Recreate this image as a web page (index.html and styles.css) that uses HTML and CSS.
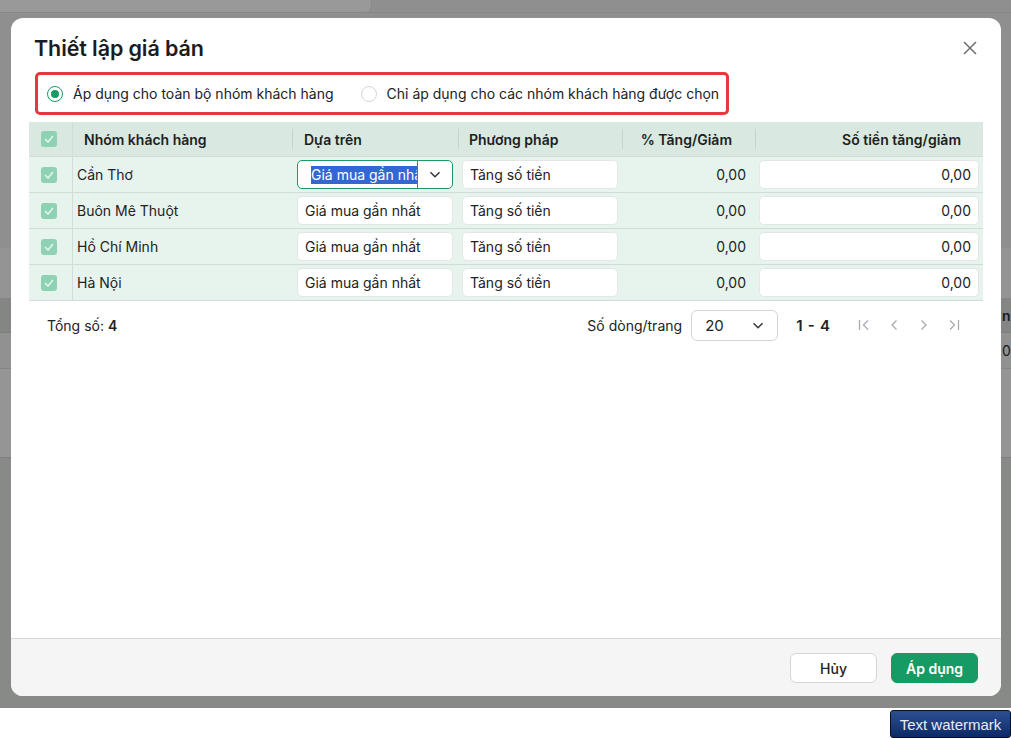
FILE: index.html
```html
<!DOCTYPE html>
<html lang="vi">
<head>
<meta charset="utf-8">
<title>Thiết lập giá bán</title>
<link rel="stylesheet" href="styles.css">
</head>
<body>
<div class="backdrop">
  <div class="bg-top"><div class="bg-top-box"></div></div>
  <div class="bg-main">
    <div class="bg-sec1"></div>
    <div class="bg-sec2"></div>
    <div class="bg-head"><span>n</span></div>
    <div class="bg-row"><span>0</span></div>
    <div class="bg-rest"></div>
  </div>
  <div class="bg-bottom"></div>
</div>

<div class="modal">
  <div class="modal-header">
    <h1 class="modal-title">Thiết lập giá bán</h1>
    <svg class="close" width="14" height="14" viewBox="0 0 14 14"><path d="M1 1l12 12M13 1L1 13" stroke="#6b6f73" stroke-width="1.5" fill="none"/></svg>
  </div>

  <div class="scope">
    <label class="radio-opt"><span class="radio checked"><span class="dot"></span></span>Áp dụng cho toàn bộ nhóm khách hàng</label>
    <label class="radio-opt second"><span class="radio"></span>Chỉ áp dụng cho các nhóm khách hàng được chọn</label>
  </div>

  <div class="table">
    <div class="row head">
      <div class="cell c-check"><span class="cb"><svg width="10" height="8" viewBox="0 0 10 8"><path d="M1 4l3 3 5-6" stroke="#e4f4ec" stroke-width="1.6" fill="none"/></svg></span></div>
      <div class="cell c-name"><span class="h-text">Nhóm khách hàng</span></div>
      <div class="cell c-base"><i class="sep"></i><span class="h-text">Dựa trên</span></div>
      <div class="cell c-method"><i class="sep"></i><span class="h-text">Phương pháp</span></div>
      <div class="cell c-pct"><i class="sep"></i><span class="h-text right">% Tăng/Giảm</span></div>
      <div class="cell c-amount"><i class="sep"></i><span class="h-text right">Số tiền tăng/giảm</span></div>
    </div>

    <div class="row">
      <div class="cell c-check"><span class="cb"><svg width="10" height="8" viewBox="0 0 10 8"><path d="M1 4l3 3 5-6" stroke="#e4f4ec" stroke-width="1.6" fill="none"/></svg></span></div>
      <div class="cell c-name">Cần Thơ</div>
      <div class="cell c-base">
        <div class="select focused">
          <span class="select-value"><span class="sel-text">Giá mua gần nhất</span></span>
          <span class="select-arrow"><svg width="12" height="7" viewBox="0 0 12 7"><path d="M1.5 1.2l4.5 4.5 4.5-4.5" stroke="#333" stroke-width="1.4" fill="none"/></svg></span>
        </div>
      </div>
      <div class="cell c-method"><div class="input">Tăng số tiền</div></div>
      <div class="cell c-pct">0,00</div>
      <div class="cell c-amount"><div class="input num">0,00</div></div>
    </div>

    <div class="row">
      <div class="cell c-check"><span class="cb"><svg width="10" height="8" viewBox="0 0 10 8"><path d="M1 4l3 3 5-6" stroke="#e4f4ec" stroke-width="1.6" fill="none"/></svg></span></div>
      <div class="cell c-name">Buôn Mê Thuột</div>
      <div class="cell c-base"><div class="input">Giá mua gần nhất</div></div>
      <div class="cell c-method"><div class="input">Tăng số tiền</div></div>
      <div class="cell c-pct">0,00</div>
      <div class="cell c-amount"><div class="input num">0,00</div></div>
    </div>

    <div class="row">
      <div class="cell c-check"><span class="cb"><svg width="10" height="8" viewBox="0 0 10 8"><path d="M1 4l3 3 5-6" stroke="#e4f4ec" stroke-width="1.6" fill="none"/></svg></span></div>
      <div class="cell c-name">Hồ Chí Minh</div>
      <div class="cell c-base"><div class="input">Giá mua gần nhất</div></div>
      <div class="cell c-method"><div class="input">Tăng số tiền</div></div>
      <div class="cell c-pct">0,00</div>
      <div class="cell c-amount"><div class="input num">0,00</div></div>
    </div>

    <div class="row">
      <div class="cell c-check"><span class="cb"><svg width="10" height="8" viewBox="0 0 10 8"><path d="M1 4l3 3 5-6" stroke="#e4f4ec" stroke-width="1.6" fill="none"/></svg></span></div>
      <div class="cell c-name">Hà Nội</div>
      <div class="cell c-base"><div class="input">Giá mua gần nhất</div></div>
      <div class="cell c-method"><div class="input">Tăng số tiền</div></div>
      <div class="cell c-pct">0,00</div>
      <div class="cell c-amount"><div class="input num">0,00</div></div>
    </div>

    <div class="pager">
      <div class="total">Tổng số: <b>4</b></div>
      <div class="pager-right">
        <span class="per-page-label">Số dòng/trang</span>
        <div class="page-size"><span>20</span><svg width="12" height="7" viewBox="0 0 12 7"><path d="M1.5 1.2l4.5 4.5 4.5-4.5" stroke="#333" stroke-width="1.4" fill="none"/></svg></div>
        <b class="range">1 - 4</b>
        <div class="nav">
          <svg width="12" height="14" viewBox="0 0 12 14"><path d="M1.5 2v10M10 2.5L5.5 7l4.5 4.5" stroke="#a6abb0" stroke-width="1.3" fill="none"/></svg>
          <svg width="12" height="14" viewBox="0 0 12 14"><path d="M8.5 2.5L4 7l4.5 4.5" stroke="#a6abb0" stroke-width="1.3" fill="none"/></svg>
          <svg width="12" height="14" viewBox="0 0 12 14"><path d="M3.5 2.5L8 7l-4.5 4.5" stroke="#a6abb0" stroke-width="1.3" fill="none"/></svg>
          <svg width="12" height="14" viewBox="0 0 12 14"><path d="M2 2.5L6.5 7 2 11.5M10.5 2v10" stroke="#a6abb0" stroke-width="1.3" fill="none"/></svg>
        </div>
      </div>
    </div>
  </div>

  <div class="modal-footer">
    <button class="btn btn-cancel">Hủy</button>
    <button class="btn btn-primary">Áp dụng</button>
  </div>
</div>

<div class="watermark">Text watermark</div>
</body>
</html>
```

FILE: styles.css
```css
* { box-sizing: border-box; }

body {
  margin: 0;
  width: 1011px;
  height: 738px;
  overflow: hidden;
  position: relative;
  background: #ffffff;
  font-family: Inter, "Noto Sans", "Liberation Sans", sans-serif;
  font-size: 14px;
  color: #222;
}

/* ---------- backdrop (page behind the overlay) ---------- */
.backdrop {
  height: 708px;
  display: flex;
  flex-direction: column;
  background: #888a88;
}
.bg-top {
  height: 13px;
  background: #8e8f8e;
  border-bottom: 1px solid #858685;
}
.bg-top-box {
  width: 372px;
  height: 12px;
  background: #999999;
  border-right: 1px solid #888;
  border-bottom-right-radius: 6px;
}
.bg-main {
  height: 445px;
  display: flex;
  flex-direction: column;
  border-bottom: 1px solid #7f817f;
}
.bg-sec1 { height: 235px; background: #8e8f8e; }
.bg-sec2 { height: 50px; background: #939493; }
.bg-head {
  height: 35px;
  background: #848684;
  border-bottom: 1px solid #7c7e7c;
  display: flex;
  align-items: center;
  padding-left: 1002px;
  font-weight: 600;
  color: #1b1b1b;
}
.bg-row {
  height: 36px;
  background: #909190;
  border-bottom: 1px solid #838583;
  display: flex;
  align-items: center;
  padding-left: 1002px;
  color: #1b1b1b;
}
.bg-rest { flex: 1; background: #959595; }
.bg-bottom { flex: 1; background: #888a88; }

/* ---------- modal ---------- */
.modal {
  position: absolute;
  left: 11px;
  top: 18px;
  width: 990px;
  height: 678px;
  background: #fff;
  border-radius: 12px;
  overflow: hidden;
  display: flex;
  flex-direction: column;
}
.modal-header {
  height: 44px;
  padding: 16px 24px 0 23px;
  display: flex;
  align-items: center;
  justify-content: space-between;
}
.modal-title {
  margin: 0;
  font-size: 21.5px;
  line-height: 28px;
  font-weight: 600;
  color: #1b1c1d;
  letter-spacing: -0.1px;
}
.close { display: block; }

/* scope radios */
.scope {
  margin: 10px 0 0 24px;
  width: 694px;
  height: 43px;
  border: 3px solid #e5393b;
  border-radius: 5px;
  display: flex;
  align-items: center;
  padding-left: 9px;
}
.radio-opt {
  display: flex;
  align-items: center;
  gap: 10px;
  color: #222;
  white-space: nowrap;
}
.radio-opt.second { margin-left: 27px; }
.radio {
  width: 16px;
  height: 16px;
  border-radius: 50%;
  border: 1px solid #d4d6d8;
  display: flex;
  align-items: center;
  justify-content: center;
  background: #fff;
}
.radio.checked { border: 1.5px solid #179c65; }
.radio .dot {
  width: 8px;
  height: 8px;
  border-radius: 50%;
  background: #179c65;
}

/* table */
.table {
  margin: 7px 18px 0;
}
.row {
  display: grid;
  grid-template-columns: 44px 219px 166px 164px 133px 228px;
  height: 36px;
  background: #e7f4ee;
  border-bottom: 1px solid #d3dad7;
}
.row.head {
  height: 35px;
  background: #d9e8e0;
}
.cell {
  display: flex;
  align-items: center;
  min-width: 0;
  white-space: nowrap;
}
.c-check {
  padding-left: 12px;
  border-right: 1px solid #d2ddd8;
}
.cb {
  width: 16px;
  height: 16px;
  border-radius: 3px;
  background: #8fd2b3;
  display: flex;
  align-items: center;
  justify-content: center;
}
.sep {
  width: 1px;
  height: 20px;
  background: #c7d4ce;
  flex: none;
}
.h-text {
  font-weight: 600;
  color: #1d1e1f;
}
.h-text.right { margin-left: auto; }

/* body-row cell paddings */
.c-name { padding-left: 4px; }
.c-base { padding-left: 5px; }
.c-method { padding-left: 4px; }
.c-pct { justify-content: flex-end; padding-right: 9px; }
.c-amount { padding-left: 4px; }

/* header cell paddings */
.head .c-name,
.head .c-base,
.head .c-method,
.head .c-pct,
.head .c-amount { padding-left: 0; padding-right: 0; }
.head .c-name .h-text { padding-left: 11px; }
.head .c-base .h-text { padding-left: 11px; }
.head .c-method .h-text { padding-left: 10px; }
.head .c-pct .h-text { padding-right: 23px; }
.head .c-amount .h-text { padding-right: 22px; }

.input {
  width: 156px;
  height: 29px;
  background: #fff;
  border: 1px solid #e3e8e6;
  border-radius: 5px;
  display: flex;
  align-items: center;
  padding-left: 7px;
  color: #222;
}
.c-amount .input { width: 220px; }
.input.num {
  justify-content: flex-end;
  padding-left: 0;
  padding-right: 7px;
}

.select {
  width: 156px;
  height: 29px;
  background: #fff;
  border-radius: 5px;
  display: flex;
  align-items: stretch;
}
.select.focused { border: 1px solid #1a9a64; }
.select-value {
  width: 119px;
  overflow: hidden;
  display: flex;
  align-items: center;
  padding-left: 13px;
}
.sel-text {
  background: #3367d2;
  color: #fff;
  line-height: 18px;
  white-space: nowrap;
}
.select-arrow {
  flex: 1;
  border-left: 1px solid #1a9a64;
  display: flex;
  align-items: center;
  justify-content: center;
}

/* pager */
.pager {
  height: 48px;
  display: flex;
  align-items: center;
  padding: 0 23px 0 18px;
}
.total { color: #222; }
.total b { font-weight: 600; }
.pager-right {
  margin-left: auto;
  display: flex;
  align-items: center;
}
.per-page-label { margin-right: 9px; }
.page-size {
  width: 87px;
  height: 31px;
  border: 1px solid #d3d6d9;
  border-radius: 6px;
  display: flex;
  align-items: center;
  justify-content: space-between;
  padding: 0 13px 0 13px;
  font-size: 15px;
}
.range {
  margin-left: 18px;
  font-weight: 600;
  font-size: 15px;
  word-spacing: 1.5px;
}
.nav {
  margin-left: 28px;
  display: flex;
  align-items: center;
  gap: 18px;
}
.nav svg { display: block; }

/* footer */
.modal-footer {
  margin-top: auto;
  height: 58px;
  background: #f5f5f5;
  border-top: 1px solid #d6d6dc;
  display: flex;
  justify-content: flex-end;
  gap: 14px;
  padding: 14px 23px 0;
}
.btn {
  width: 87px;
  height: 30px;
  border-radius: 6px;
  font-family: Inter, "Noto Sans", sans-serif;
  font-size: 14px;
  cursor: pointer;
}
.btn-cancel {
  background: #fff;
  border: 1px solid #d5d5d5;
  color: #222;
  font-weight: 500;
}
.btn-primary {
  background: #169b64;
  border: 1px solid #169b64;
  color: #fff;
  font-weight: 600;
}

/* watermark */
.watermark {
  position: absolute;
  left: 890px;
  top: 710px;
  width: 121px;
  height: 28px;
  border: 1px solid #0a0f1e;
  border-radius: 3px;
  background: linear-gradient(#2c4f93, #0d2a66);
  color: #e9ecf2;
  font-family: "Liberation Sans", Arial, sans-serif;
  font-size: 15px;
  display: flex;
  align-items: center;
  justify-content: center;
  white-space: nowrap;
}
```
